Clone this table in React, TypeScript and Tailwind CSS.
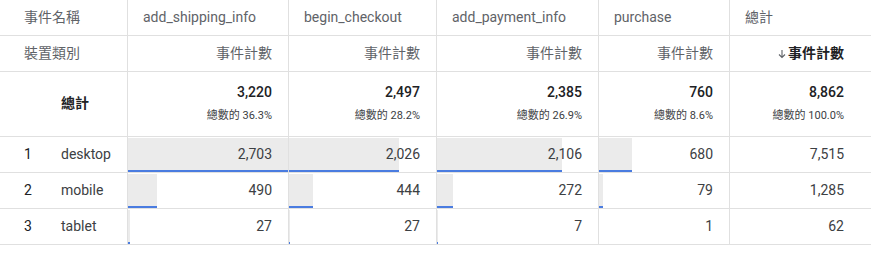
import React from "react";

const MAX = 2703;
const cols = ["add_shipping_info", "begin_checkout", "add_payment_info", "purchase"];
const totals = [
  ["3,220", "總數的 36.3%"],
  ["2,497", "總數的 28.2%"],
  ["2,385", "總數的 26.9%"],
  ["760", "總數的 8.6%"],
  ["8,862", "總數的 100.0%"],
];
const rows: { i: number; name: string; vals: number[]; total: string }[] = [
  { i: 1, name: "desktop", vals: [2703, 2026, 2106, 680], total: "7,515" },
  { i: 2, name: "mobile", vals: [490, 444, 272, 79], total: "1,285" },
  { i: 3, name: "tablet", vals: [27, 27, 7, 1], total: "62" },
];

const font = { fontFamily: "Roboto, 'Noto Sans CJK TC', sans-serif" };
const fmt = (n: number) => n.toLocaleString("en-US");

export default function App() {
  const cell = "border-b border-[#e0e0e0]";
  const rb = "border-r border-[#e0e0e0]";
  return (
    <div className="w-[871px] h-[253px] bg-white text-[14px]" style={font}>
      <div className="grid grid-cols-[128px_161px_148px_162px_131px_141px] grid-rows-[36px_36px_65px_36px_36px_36px]">
        {/* header row 1 */}
        <div className={`${cell} ${rb} flex items-center pl-6 text-[#5f6368]`}>事件名稱</div>
        {cols.map((c) => (
          <div key={c} className={`${cell} ${rb} flex items-center pl-[15px] text-[#5f6368]`}>{c}</div>
        ))}
        <div className={`${cell} flex items-center pl-[15px] text-[#5f6368]`}>總計</div>

        {/* header row 2 */}
        <div className={`${cell} ${rb} flex items-center pl-6 text-[#5f6368]`}>裝置類別</div>
        {cols.map((c) => (
          <div key={c} className={`${cell} ${rb} flex items-center justify-end pr-4 text-[#5f6368]`}>事件計數</div>
        ))}
        <div className={`${cell} flex items-center justify-end pr-[27px] text-[#202124] font-bold`}>
          <svg width="8" height="10" viewBox="0 0 8 10" className="mr-[2px] mt-[1px]">
            <path d="M4 1v7.5M1 5.5l3 3 3-3" stroke="#5f6368" strokeWidth="1.1" fill="none" />
          </svg>
          事件計數
        </div>

        {/* totals row */}
        <div className={`${cell} ${rb} flex items-center pl-[61px] pb-[1px] font-bold text-[#202124]`}>總計</div>
        {totals.map(([n, p], k) => (
          <div
            key={k}
            className={`${cell} ${k < 4 ? rb : ""} flex flex-col items-end justify-center gap-[8px] pb-[2px] ${k < 4 ? "pr-4" : "pr-[27px]"}`}
          >
            <div className="leading-[18px] font-medium text-[#202124] text-[14px]">{n}</div>
            <div className="leading-[14px] text-[11px] text-[#3c4043]">{p}</div>
          </div>
        ))}

        {/* data rows */}
        {rows.map((r) => (
          <React.Fragment key={r.i}>
            <div className={`${cell} ${rb} flex items-center text-[#202124]`}>
              <span className="w-[61px] pl-6">{r.i}</span>
              <span className="text-[#3c4043]">{r.name}</span>
            </div>
            {r.vals.map((v, k) => (
              <div key={k} className={`${cell} ${rb} relative flex items-center justify-end pr-4 text-[#3c4043]`}>
                <div
                  className="absolute left-0 top-[1px] bottom-0 bg-[#ebebeb] border-b-2 border-[#4a7ce0]"
                  style={{ width: `${(v / MAX) * 100}%` }}
                />
                <span className="relative">{fmt(v)}</span>
              </div>
            ))}
            <div className={`${cell} flex items-center justify-end pr-[27px] text-[#3c4043]`}>{r.total}</div>
          </React.Fragment>
        ))}
      </div>
    </div>
  );
}
